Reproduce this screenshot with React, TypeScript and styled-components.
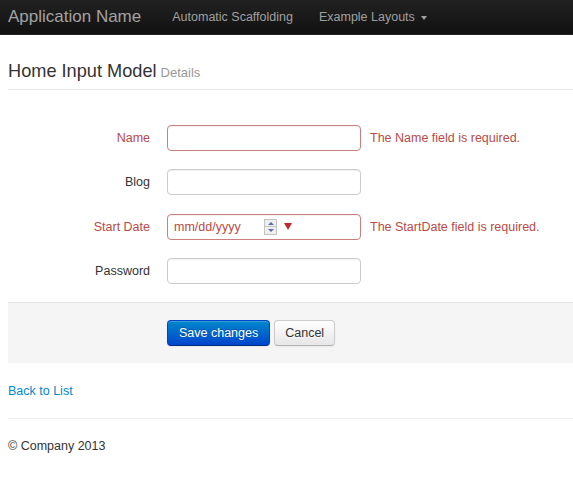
import React from "react";
import styled, { createGlobalStyle } from "styled-components";

const Global = createGlobalStyle`
  html, body { margin: 0; padding: 0; background: #fff; }
  body {
    font-family: "Liberation Sans", Arial, sans-serif;
    font-size: 12.5px;
    line-height: 18px;
    color: #333;
    overflow: hidden;
  }
`;

const Navbar = styled.div`
  height: 34px;
  background: linear-gradient(to bottom, #222222, #111111);
  border-bottom: 1px solid #252525;
  display: flex;
  align-items: center;
  padding-left: 8px;
`;

const Brand = styled.a`
  font-size: 17px;
  color: #a3a3a3;
  text-decoration: none;
  margin-right: 31px;
`;

const NavLink = styled.a`
  font-size: 12.5px;
  color: #a0a0a0;
  text-decoration: none;
  margin-right: 26px;
  display: inline-flex;
  align-items: center;
`;

const Caret = styled.span`
  display: inline-block;
  width: 0;
  height: 0;
  margin-left: 6px;
  margin-top: 1px;
  border-left: 3.5px solid transparent;
  border-right: 3.5px solid transparent;
  border-top: 4px solid #a0a0a0;
`;

const Container = styled.div`
  padding-left: 8px;
`;

const PageHeader = styled.div`
  margin-top: 24px;
  padding-bottom: 6px;
  border-bottom: 1px solid #e6e6e6;
`;

const Title = styled.h1`
  margin: 0;
  height: 24px;
  display: flex;
  align-items: baseline;
  gap: 4px;
  font-size: 18.2px;
  font-weight: normal;
  line-height: 24px;
  color: #333;
`;

const Small = styled.small`
  font-size: 13px;
  line-height: 24px;
  color: #999;
`;

const Form = styled.form`
  margin-top: 35px;
  display: flex;
  flex-direction: column;
`;

const Row = styled.div`
  display: flex;
  align-items: center;
  height: 26px;
  margin-bottom: 18.4px;
`;

const Label = styled.label<{ $error?: boolean }>`
  width: 142px;
  text-align: right;
  margin-right: 17px;
  color: ${(p) => (p.$error ? "#b94a48" : "#333")};
`;

const Input = styled.input<{ $error?: boolean }>`
  box-sizing: border-box;
  width: 194px;
  height: 26px;
  padding: 3px 6px;
  font-family: inherit;
  font-size: 12.5px;
  border: 1px solid ${(p) => (p.$error ? "#cd7f7d" : "#cccccc")};
  border-radius: 4px;
  box-shadow: inset 0 1px 1px rgba(0, 0, 0, 0.06);
  outline: none;
  background: #fff;
`;

const DateBox = styled.div`
  box-sizing: border-box;
  width: 194px;
  height: 26px;
  padding: 0 6px;
  border: 1px solid #cd7f7d;
  border-radius: 4px;
  box-shadow: inset 0 1px 1px rgba(0, 0, 0, 0.06);
  display: flex;
  align-items: center;
  color: #b94a48;
`;

const DateText = styled.span`
  width: 90px;
`;

const Spinner = styled.div`
  display: flex;
  flex-direction: column;
  width: 13px;
  height: 16px;
  border: 1px solid #c4c4c4;
  background: #efefef;
  box-sizing: border-box;
`;

const SpinHalf = styled.div<{ $down?: boolean }>`
  flex: 1;
  display: flex;
  align-items: center;
  justify-content: center;
  border-top: ${(p) => (p.$down ? "1px solid #c4c4c4" : "none")};
  &::after {
    content: "";
    width: 0;
    height: 0;
    border-left: 3px solid transparent;
    border-right: 3px solid transparent;
    ${(p) =>
      p.$down
        ? "border-top: 3px solid #5a6fa8;"
        : "border-bottom: 3px solid #5a6fa8;"}
  }
`;

const DropArrow = styled.span`
  margin-left: 7px;
  width: 0;
  height: 0;
  border-left: 4px solid transparent;
  border-right: 4px solid transparent;
  border-top: 7px solid #c0282d;
`;

const Help = styled.span`
  margin-left: 9px;
  color: #b94a48;
`;

const Actions = styled.div`
  margin-top: -0.6px;
  padding: 17px 0 17px 159px;
  background: #f5f5f5;
  border-top: 1px solid #e5e5e5;
  display: flex;
  gap: 4px;
`;

const Button = styled.button<{ $primary?: boolean }>`
  box-sizing: border-box;
  height: 26px;
  padding: 0 ${(p) => (p.$primary ? "11px" : "10px")};
  font-family: inherit;
  font-size: 12.5px;
  border-radius: 4px;
  cursor: pointer;
  color: ${(p) => (p.$primary ? "#fff" : "#333")};
  background: ${(p) =>
    p.$primary
      ? "linear-gradient(to bottom, #0088cc, #0044cc)"
      : "linear-gradient(to bottom, #ffffff, #e6e6e6)"};
  border-width: 1px;
  border-style: solid;
  border-color: ${(p) =>
    p.$primary ? "#0044cc #0044cc #002a80" : "#cccccc #cccccc #b3b3b3"};
  box-shadow: inset 0 1px 0 rgba(255, 255, 255, 0.2), 0 1px 2px rgba(0, 0, 0, 0.05);
  text-shadow: ${(p) =>
    p.$primary ? "0 -1px 0 rgba(0,0,0,0.25)" : "0 1px 1px rgba(255,255,255,0.75)"};
`;

const BackLink = styled.a`
  display: block;
  margin-top: 19px;
  color: #0088cc;
  text-decoration: none;
`;

const Rule = styled.hr`
  margin: 18px 0 18px;
  border: 0;
  border-top: 1px solid #eeeeee;
  border-bottom: 1px solid #ffffff;
`;

const Footer = styled.footer`
  margin-top: -1px;
`;

export default function App() {
  return (
    <>
      <Global />
      <Navbar>
        <Brand href="#">Application Name</Brand>
        <NavLink href="#">Automatic Scaffolding</NavLink>
        <NavLink href="#">
          Example Layouts
          <Caret />
        </NavLink>
      </Navbar>
      <Container>
        <PageHeader>
          <Title>
            Home Input Model <Small>Details</Small>
          </Title>
        </PageHeader>
        <Form onSubmit={(e) => e.preventDefault()}>
          <Row>
            <Label $error>Name</Label>
            <Input $error />
            <Help>The Name field is required.</Help>
          </Row>
          <Row>
            <Label>Blog</Label>
            <Input />
          </Row>
          <Row>
            <Label $error>Start Date</Label>
            <DateBox>
              <DateText>mm/dd/yyyy</DateText>
              <Spinner>
                <SpinHalf />
                <SpinHalf $down />
              </Spinner>
              <DropArrow />
            </DateBox>
            <Help>The StartDate field is required.</Help>
          </Row>
          <Row>
            <Label>Password</Label>
            <Input type="password" />
          </Row>
          <Actions>
            <Button $primary type="submit">Save changes</Button>
            <Button type="button">Cancel</Button>
          </Actions>
        </Form>
        <BackLink href="#">Back to List</BackLink>
        <Rule />
        <Footer>© Company 2013</Footer>
      </Container>
    </>
  );
}
